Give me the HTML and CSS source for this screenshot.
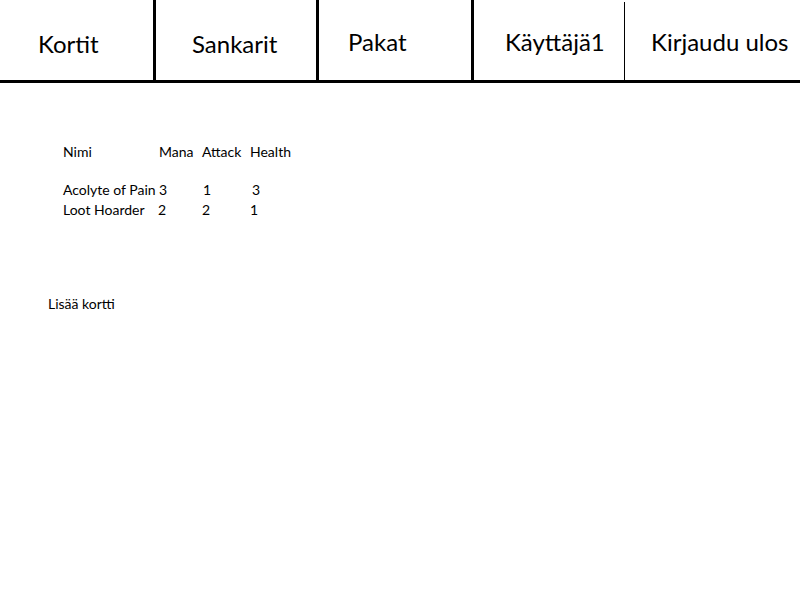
FILE: index.html
```html
<!DOCTYPE html>
<html lang="fi">
<head>
<meta charset="utf-8">
<title>Kortit</title>
<link rel="stylesheet" href="styles.css">
</head>
<body>
<header class="nav">
  <a class="nav-item item-kortit">Kortit</a>
  <a class="nav-item item-sankarit">Sankarit</a>
  <a class="nav-item item-pakat">Pakat</a>
  <a class="nav-item item-user">Käyttäjä1</a>
  <a class="nav-item item-logout">Kirjaudu ulos</a>
</header>
<main class="content">
  <div class="cards">
    <div class="row head">
      <span>Nimi</span><span>Mana</span><span>Attack</span><span>Health</span>
    </div>
    <div class="row first">
      <span>Acolyte of Pain</span><span>3</span><span class="v-attack">1</span><span class="v-health">3</span>
    </div>
    <div class="row">
      <span>Loot Hoarder</span><span class="v-mana2">2</span><span>2</span><span>1</span>
    </div>
  </div>
  <p class="add">Lisää kortti</p>
</main>
</body>
</html>
```
FILE: styles.css
```css
html, body {
  margin: 0;
  padding: 0;
  background: #fff;
}
body {
  font-family: Lato, "Open Sans", sans-serif;
  color: #000;
}
.nav {
  display: flex;
  align-items: flex-start;
  height: 80px;
  border-bottom: 3px solid #000;
}
.nav-item {
  box-sizing: border-box;
  height: 80px;
  font-size: 24px;
  line-height: 24px;
  padding-top: 32px;
  border-right: 3px solid #000;
  color: #000;
  text-decoration: none;
}
.item-kortit { width: 156px; padding-left: 38px; }
.item-sankarit { width: 163px; padding-left: 36px; }
.item-pakat { width: 155px; padding-left: 29px; padding-top: 30px; }
.item-user { width: 151px; padding-left: 31px; border-right-width: 1px; margin-top: 2px; height: 78px; padding-top: 28px; }
.item-logout { flex: 1; padding-left: 26px; padding-top: 30px; border-right: none; }

.content {
  padding: 0;
}
.cards {
  margin: 0 0 0 63px;
  padding-top: 59px;
  font-size: 14px;
  line-height: 20px;
}
.row {
  display: grid;
  grid-template-columns: 96px 43px 48px auto;
}
.row.head { margin-bottom: 18px; }
.v-attack { padding-left: 1px; }
.v-health { padding-left: 2px; }
.v-mana2 { margin-left: -1px; }
.add {
  margin: 74px 0 0 48px;
  font-size: 14px;
  line-height: 20px;
}
```
